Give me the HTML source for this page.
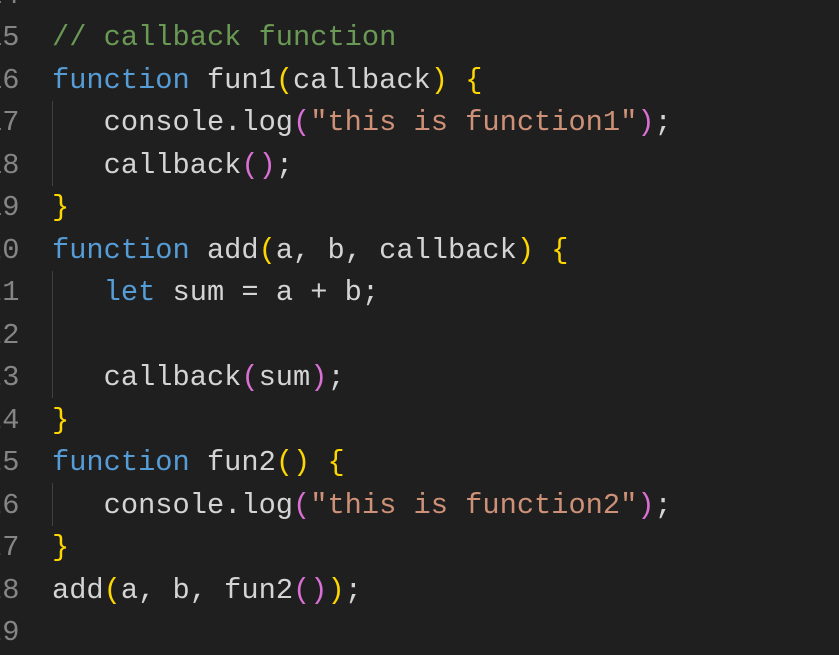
<!DOCTYPE html>
<html><head><style>
html,body{margin:0;padding:0;background:#1f1f1f;width:839px;height:641px;overflow:hidden}
.l{position:absolute;left:0;height:42.5px;line-height:42.5px;font-family:"Liberation Mono",monospace;font-size:28.7px;white-space:pre;color:#d4d4d4}
.n{position:absolute;left:-15px;color:#858585}
.c{position:absolute;left:52px}
.g{position:absolute;left:52px;width:1px;background:#404040}
.k{color:#569cd6}.cm{color:#6a9955}.s{color:#ce9178}.y{color:#ffd700}.p{color:#da70d6}
</style></head><body>
<div class="g" style="top:101px;height:85px"></div>
<div class="g" style="top:271px;height:127px"></div>
<div class="g" style="top:483px;height:43px"></div>
<div class="l" style="top:-25px"><span class="n">14</span></div>
<div class="l" style="top:17px"><span class="n">15</span><span class="c"><span class="cm">// callback function</span></span></div>
<div class="l" style="top:59.5px"><span class="n">16</span><span class="c"><span class="k">function</span> fun1<span class="y">(</span>callback<span class="y">)</span> <span class="y">{</span></span></div>
<div class="l" style="top:102px"><span class="n">17</span><span class="c">   console.log<span class="p">(</span><span class="s">"this is function1"</span><span class="p">)</span>;</span></div>
<div class="l" style="top:144.5px"><span class="n">18</span><span class="c">   callback<span class="p">()</span>;</span></div>
<div class="l" style="top:187px"><span class="n">19</span><span class="c"><span class="y">}</span></span></div>
<div class="l" style="top:229.5px"><span class="n">20</span><span class="c"><span class="k">function</span> add<span class="y">(</span>a, b, callback<span class="y">)</span> <span class="y">{</span></span></div>
<div class="l" style="top:272px"><span class="n">21</span><span class="c">   <span class="k">let</span> sum = a + b;</span></div>
<div class="l" style="top:314.5px"><span class="n">22</span></div>
<div class="l" style="top:357px"><span class="n">23</span><span class="c">   callback<span class="p">(</span>sum<span class="p">)</span>;</span></div>
<div class="l" style="top:399.5px"><span class="n">24</span><span class="c"><span class="y">}</span></span></div>
<div class="l" style="top:442px"><span class="n">25</span><span class="c"><span class="k">function</span> fun2<span class="y">()</span> <span class="y">{</span></span></div>
<div class="l" style="top:484.5px"><span class="n">26</span><span class="c">   console.log<span class="p">(</span><span class="s">"this is function2"</span><span class="p">)</span>;</span></div>
<div class="l" style="top:527px"><span class="n">27</span><span class="c"><span class="y">}</span></span></div>
<div class="l" style="top:569.5px"><span class="n">28</span><span class="c">add<span class="y">(</span>a, b, fun2<span class="p">()</span><span class="y">)</span>;</span></div>
<div class="l" style="top:612px"><span class="n">29</span></div>
</body></html>
